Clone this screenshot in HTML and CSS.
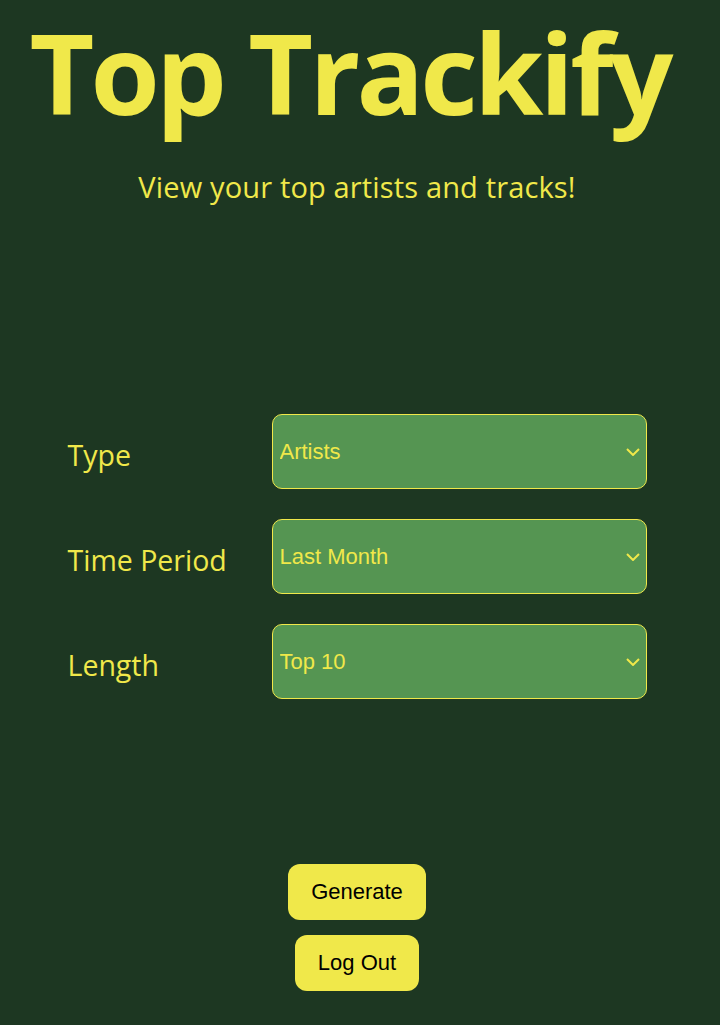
FILE: index.html
```html
<!DOCTYPE html>
<html lang="en">
<head>
<meta charset="utf-8">
<title>Top Trackify</title>
<link rel="stylesheet" href="styles.css">
</head>
<body>
<main class="page">
  <header class="hero">
    <h1 class="title">Top Trackify</h1>
    <p class="subtitle">View your top artists and tracks!</p>
  </header>
  <form class="form">
    <label class="label" for="type">Type</label>
    <select class="select" id="type">
      <option>Artists</option>
      <option>Tracks</option>
    </select>
    <label class="label" for="period">Time Period</label>
    <select class="select" id="period">
      <option>Last Month</option>
      <option>Last 6 Months</option>
      <option>All Time</option>
    </select>
    <label class="label" for="length">Length</label>
    <select class="select" id="length">
      <option>Top 10</option>
      <option>Top 25</option>
      <option>Top 50</option>
    </select>
  </form>
  <div class="actions">
    <button class="btn" type="button">Generate</button>
    <button class="btn" type="button">Log Out</button>
  </div>
</main>
</body>
</html>
```
FILE: styles.css
```css
html, body {
  margin: 0;
  padding: 0;
  background: #1d3722;
}
body {
  height: 1025px;
  overflow: hidden;
  color: #f0e84a;
  font-family: "Open Sans", "DejaVu Sans", sans-serif;
}
.page {
  width: 714px;
  display: flex;
  flex-direction: column;
  align-items: center;
}
.hero {
  display: flex;
  flex-direction: column;
  align-items: center;
}
.title {
  margin: 0 15px 0 0;
  padding: 2px 4px 0;
  font-size: 112px;
  font-weight: 700;
  line-height: 140px;
  letter-spacing: -3.8px;
  white-space: nowrap;
}
.subtitle {
  margin: 28px 0 0;
  font-size: 29px;
  line-height: 34px;
  letter-spacing: 0.15px;
}
.form {
  margin-top: 210px;
  display: grid;
  grid-template-columns: 204px 375px;
  row-gap: 30px;
  align-items: center;
}
.label {
  font-size: 28.5px;
  line-height: 34px;
  padding-top: 6px;
}
.select {
  appearance: none;
  -webkit-appearance: none;
  height: 75px;
  box-sizing: border-box;
  background-color: #559552;
  background-image: url("data:image/svg+xml,%3Csvg xmlns='http://www.w3.org/2000/svg' width='14' height='8' viewBox='0 0 14 8'%3E%3Cpath d='M1 1l6 6 6-6' fill='none' stroke='%23f0e84a' stroke-width='2'/%3E%3C/svg%3E");
  background-repeat: no-repeat;
  background-position: right 6px center;
  color: #f0e84a;
  border: 1px solid #f0e84a;
  border-radius: 10px;
  font-family: "Liberation Sans", Arial, sans-serif;
  font-size: 22px;
  padding: 0 30px 0 7px;
}
.actions {
  margin-top: 165px;
  display: flex;
  flex-direction: column;
  align-items: center;
  gap: 15px;
}
.btn {
  height: 56px;
  padding: 0 23px;
  border: none;
  border-radius: 12px;
  background: #f0e84a;
  color: #000;
  font-family: "Liberation Sans", Arial, sans-serif;
  font-size: 22px;
}
```
